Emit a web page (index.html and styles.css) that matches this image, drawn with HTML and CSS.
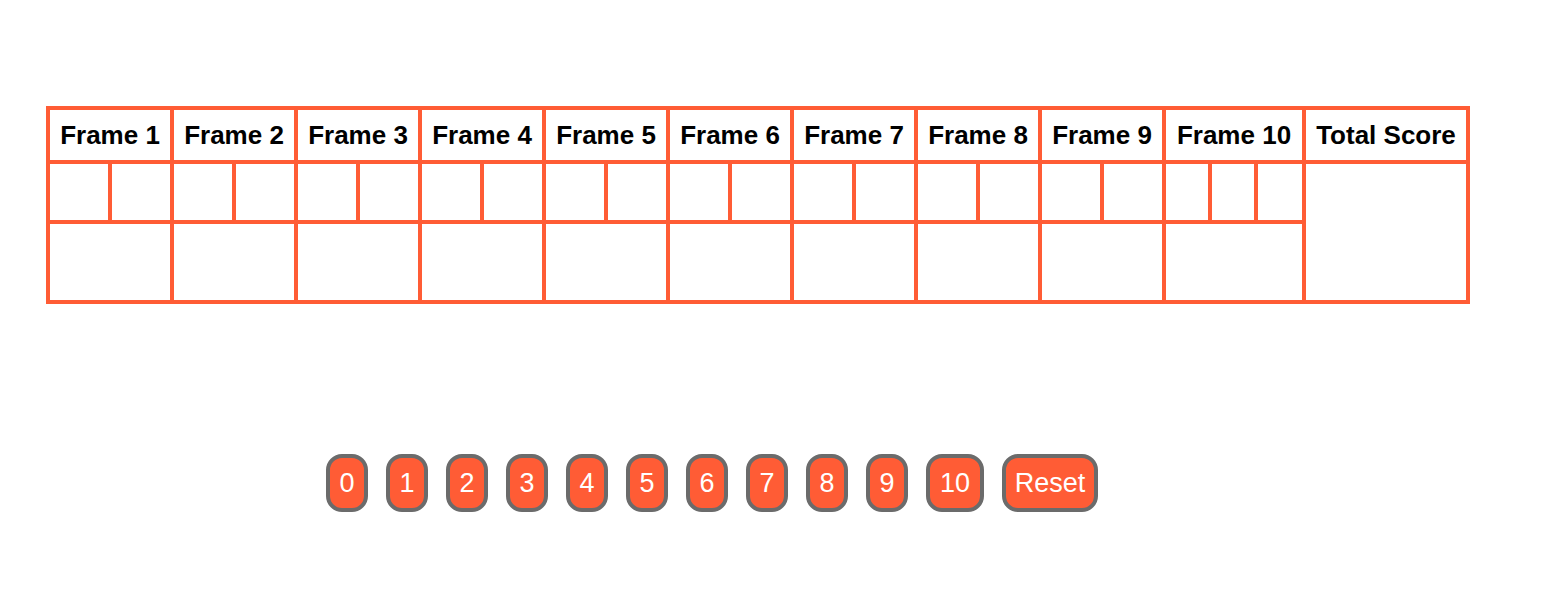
FILE: index.html
```html
<!DOCTYPE html>
<html lang="en">
<head>
<meta charset="utf-8">
<title>Bowling Scorecard</title>
<link rel="stylesheet" href="styles.css">
</head>
<body>
<main class="page">
<table class="scorecard">
<colgroup>
<col class="roll" span="18">
<col class="last-roll" span="2">
<col class="bonus-roll">
<col class="total">
</colgroup>
<thead>
<tr>
<th scope="col" colspan="2">Frame 1</th>
<th scope="col" colspan="2">Frame 2</th>
<th scope="col" colspan="2">Frame 3</th>
<th scope="col" colspan="2">Frame 4</th>
<th scope="col" colspan="2">Frame 5</th>
<th scope="col" colspan="2">Frame 6</th>
<th scope="col" colspan="2">Frame 7</th>
<th scope="col" colspan="2">Frame 8</th>
<th scope="col" colspan="2">Frame 9</th>
<th scope="col" colspan="3">Frame 10</th>
<th scope="col">Total Score</th>
</tr>
</thead>
<tbody>
<tr class="rolls">
<td></td><td></td>
<td></td><td></td>
<td></td><td></td>
<td></td><td></td>
<td></td><td></td>
<td></td><td></td>
<td></td><td></td>
<td></td><td></td>
<td></td><td></td>
<td></td><td></td><td></td>
<td rowspan="2"></td>
</tr>
<tr class="totals">
<td colspan="2"></td>
<td colspan="2"></td>
<td colspan="2"></td>
<td colspan="2"></td>
<td colspan="2"></td>
<td colspan="2"></td>
<td colspan="2"></td>
<td colspan="2"></td>
<td colspan="2"></td>
<td colspan="3"></td>
</tr>
</tbody>
</table>
<div class="controls">
<button type="button" class="key">0</button>
<button type="button" class="key">1</button>
<button type="button" class="key">2</button>
<button type="button" class="key">3</button>
<button type="button" class="key">4</button>
<button type="button" class="key">5</button>
<button type="button" class="key">6</button>
<button type="button" class="key">7</button>
<button type="button" class="key">8</button>
<button type="button" class="key">9</button>
<button type="button" class="key key-strike">10</button>
<button type="button" class="key key-reset">Reset</button>
</div>
</main>
</body>
</html>
```

FILE: styles.css
```css
body {
  margin: 0;
  background: #fff;
  color: #000;
  font-family: "Liberation Sans", Arial, Helvetica, sans-serif;
}

.page {
  padding: 106px 46px 80px;
}

.scorecard {
  border-collapse: collapse;
}

.roll {
  width: 62px;
}

.last-roll {
  width: 46px;
}

.bonus-roll {
  width: 48px;
}

.total {
  width: 164px;
}

.scorecard th,
.scorecard td {
  border: 4px solid #ff5c35;
  padding: 10px;
}

.scorecard th {
  font-size: 26px;
  line-height: 30px;
  white-space: nowrap;
}

.rolls {
  height: 60px;
}

.totals {
  height: 80px;
}

.controls {
  display: flex;
  flex-wrap: wrap;
  gap: 18px;
  margin-top: 150px;
  padding-left: 280px;
}

.key {
  box-sizing: border-box;
  min-width: 42px;
  height: 58px;
  padding: 0 8px;
  border: 4px solid #6b6b6b;
  border-radius: 16px;
  background: #ff5c35;
  color: #fff;
  font-family: inherit;
  font-size: 27px;
  line-height: 30px;
}

.key-strike {
  min-width: 58px;
}

.key-reset {
  min-width: 96px;
}
```
